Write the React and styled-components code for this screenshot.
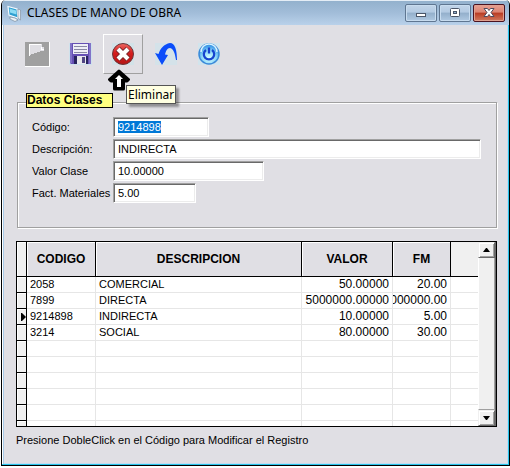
import React from "react";
import styled, { createGlobalStyle } from "styled-components";

const GlobalStyle = createGlobalStyle`
  *, *::before, *::after { box-sizing: border-box; }
  body { margin: 0; background: #fff; color: #000; font: 11px/16px "Liberation Sans", Arial, sans-serif; }
`;

const Window = styled.main`
  margin: 0 0 2px 1px;
  border: solid #000;
  border-width: 0 1px 1px;
  border-radius: 5px 5px 0 0;
  background: #e0dfe4;
  box-shadow: inset -1px -1px 0 #27c4ea, inset 1px 0 0 #fff, inset 2px 0 0 #a9cbe8, inset -2px -2px 0 #c2dcf2;
  overflow: hidden;
`;

const TitleBar = styled.header`
  display: flex;
  align-items: center;
  height: 25px;
  padding: 0 4px 0 5px;
  gap: 5px;
  border-top: 1px solid #e4edf6;
  background: linear-gradient(#93b1cd, #a2bdd9 50%, #b9d1ea);
`;

const Title = styled.h1`
  flex: 1;
  margin: 0;
  font: 12px/18px "Noto Sans", "Open Sans", sans-serif;
  white-space: nowrap;
`;

const Controls = styled.div`
  display: flex;
  gap: 2px;
`;

const ControlButton = styled.button`
  display: flex;
  align-items: center;
  justify-content: center;
  width: 32px;
  height: 18px;
  padding: 0;
  border: 1px solid ${(p) => (p.$close ? "#4a1220" : "#5f7691")};
  border-radius: 2px;
  box-shadow: inset 0 0 0 1px ${(p) => (p.$close ? "#e0a090" : "#c8dcef")};
  background: ${(p) =>
    p.$close
      ? "linear-gradient(#e8a092, #dc8371 45%, #b93b22 50%, #d17a5f)"
      : "linear-gradient(#c2d5e9, #b3cae2 45%, #93afcb 50%, #b0c9e2)"};
`;

const Toolbar = styled.div`
  display: flex;
  gap: 3px;
  padding: 9px 15px 0;
`;

const ToolItem = styled.div`
  position: relative;
`;

const ToolButton = styled.button`
  display: flex;
  align-items: center;
  justify-content: center;
  width: 40px;
  height: 40px;
  padding: 0;
  background: transparent;
  border: 1px solid;
  border-color: ${(p) => (p.$raised ? "#fff #a0a0a0 #a0a0a0 #fff" : "transparent")};
`;

const Pointer = styled.svg`
  position: absolute;
  left: 4px;
  top: 35px;
  z-index: 2;
`;

const Tooltip = styled.div`
  position: absolute;
  left: 23px;
  top: 51px;
  z-index: 3;
  padding: 0 1px;
  border: 1px solid #555;
  background: #ffffe1;
  box-shadow: 3px 3px 2px rgba(0, 0, 0, 0.35);
  font: 12px/17px "Noto Sans", "Open Sans", sans-serif;
  white-space: nowrap;
`;

const Group = styled.fieldset`
  position: relative;
  min-width: 0;
  margin: 28px 12px 0 15px;
  padding: 14px 15px 24px 14px;
  border: 1px solid #a0a0a0;
  box-shadow: 1px 1px 0 #fff, inset 1px 1px 0 #fff;
`;

const GroupTitle = styled.legend`
  position: absolute;
  left: 8px;
  top: -10px;
  width: 87px;
  padding: 0;
  border: 1px solid #000;
  background: #ffff80;
  font: bold 12px/13px "Liberation Sans", Arial, sans-serif;
`;

const Fields = styled.div`
  display: grid;
  grid-template-columns: 78px minmax(0, 1fr);
  column-gap: 3px;
  row-gap: 2px;
`;

const FieldLabel = styled.label`
  line-height: 20px;
  white-space: nowrap;
`;

const TextBox = styled.input`
  width: ${(p) => p.$width};
  height: 20px;
  padding: 0 4px;
  border: 1px solid;
  border-color: #a0a0a0 #fff #fff #a0a0a0;
  border-radius: 0;
  outline: 0;
  background: #fff;
  box-shadow: inset 1px 1px 0 #696969, inset -1px -1px 0 #ececec;
  color: #000;
  font: 11px/16px "Liberation Sans", Arial, sans-serif;
  &::selection { background: #0078d7; color: #fff; }
`;

const GridFrame = styled.section`
  display: flex;
  height: 186px;
  margin: 13px 12px 0 14px;
  border: 1px solid #000;
  background: #fff;
  overflow: hidden;
`;

const Table = styled.table`
  flex: 1;
  width: 0;
  height: max-content;
  table-layout: fixed;
  border-collapse: separate;
  border-spacing: 0;
`;

const Column = styled.col`
  width: ${(p) => p.$width};
`;

const HeadCell = styled.th`
  height: 35px;
  padding: 0;
  border: solid #000;
  border-width: 0 1px 1px 0;
  background: #e0dfe4;
  box-shadow: inset 1px 1px 0 #fff;
  font: bold 12px/16px "Liberation Sans", Arial, sans-serif;
`;

const HeadFiller = styled.td`
  padding: 0;
  border-bottom: 1px solid #000;
  background: #f0f0f0;
`;

const Selector = styled.td`
  height: 16px;
  padding: 0;
  border: solid #000;
  border-width: 0 1px 1px 0;
  background: #f0f0f0;
  box-shadow: inset 1px 1px 0 #fff;
`;

const Marker = styled.svg`
  display: block;
  margin-left: auto;
`;

const Cell = styled.td`
  height: 16px;
  padding: 0;
  border: solid #e6e6e6;
  border-width: 0 ${(p) => (p.$last ? 0 : "1px")} 1px 0;
  font-size: ${(p) => (p.$number ? "12px" : "11px")};
`;

const CellText = styled.div`
  display: flex;
  justify-content: ${(p) => (p.$number ? "flex-end" : "flex-start")};
  height: 15px;
  padding: 0 3px;
  line-height: 15px;
  overflow: hidden;
  white-space: nowrap;
`;

const ScrollBar = styled.div`
  display: flex;
  flex-direction: column;
  width: 18px;
  border-right: 1px solid #696969;
  background: #f0f0f0;
  box-shadow: inset -1px 0 0 #a0a0a0;
`;

const ScrollButton = styled.button`
  display: flex;
  align-items: center;
  justify-content: center;
  height: 16px;
  padding: 0;
  border: 1px solid;
  border-color: #f0f0f0 #696969 #696969 #f0f0f0;
  background: #f0f0f0;
  box-shadow: inset 1px 1px 0 #fff, inset -1px -1px 0 #a0a0a0;
`;

const ScrollTrack = styled.div`
  flex: 1;
  border-left: 1px solid #fff;
  border-bottom: 1px solid #a0a0a0;
`;

const Hint = styled.p`
  margin: 0;
  padding: 5px 14px 17px;
`;

const AppIcon = () => (
  <svg width="15" height="17" viewBox="0 0 15 17" aria-hidden="true">
    <path d="M1 1.500l9 2.500 1 9-9-3z" fill="#2f9fd0" stroke="#f4faff" strokeWidth="1.200" />
    <path d="M2.500 3.500l6.500 2 .5 4-6.500-2z" fill="#8edcf4" />
    <path d="M11 4l2.500 1v10L11 13z" fill="#e7edf2" stroke="#7d8c9b" strokeWidth=".6" />
    <path d="M3 12l5 1 3 2-3 1.500-5-2.500z" fill="#eef3f7" stroke="#6d7f92" strokeWidth=".6" />
  </svg>
);

const NewIcon = () => (
  <svg width="25" height="25" viewBox="0 0 25 25" shapeRendering="crispEdges" aria-hidden="true">
    <path d="M0 0h25v25H0z" fill="#fff" />
    <path d="M0 0h24v24H0z" fill="#a0a0a0" />
    <path d="M4 2h13v3h2v4h-4v1h-3v1H9v1H6v1H5v1H4z" fill="#e0dfe4" />
    <path d="M4 14V2h12M16 5v2h3" fill="none" stroke="#fff" />
  </svg>
);

const SaveIcon = () => (
  <svg width="23" height="22" viewBox="0 0 23 22" aria-hidden="true">
    <path d="M0 0h23v22H0z" fill="#cfe2ec" />
    <path d="M1 0h21v21H2l-1-1z" fill="#6650b4" />
    <path d="M1 0h2v20H1zM20 0h2v21h-2z" fill="#8173c8" />
    <path d="M4 1h15v10H4z" fill="#eeeef6" />
    <path d="M5 3.500h13M5 6.500h13M5 9.500h13" stroke="#8988a4" />
    <path d="M5 13h14v8H5z" fill="#28245f" />
    <path d="M8 13h9v8H8z" fill="#e9e9ed" />
    <path d="M13 14h3v6h-3z" fill="#514684" />
  </svg>
);

const DeleteIcon = () => (
  <svg width="22" height="22" viewBox="0 0 22 22" aria-hidden="true">
    <defs>
      <linearGradient id="red" x1="0" y1="0" x2="0" y2="1">
        <stop offset="0" stopColor="#ed6661" />
        <stop offset=".45" stopColor="#d51d1d" />
        <stop offset="1" stopColor="#b51515" />
      </linearGradient>
    </defs>
    <path d="M0 0h22v22H0z" fill="#d2e2e8" />
    <circle cx="11" cy="11" r="10.500" fill="url(#red)" stroke="#6b3438" />
    <path d="M5.800 5.800l10.400 10.400M16.200 5.800L5.800 16.200" stroke="#79272b" strokeWidth="6" />
    <path d="M6 6l10 10M16 6L6 16" stroke="#fff" strokeWidth="4.200" />
  </svg>
);

const UndoIcon = () => (
  <svg width="22" height="22" viewBox="0 0 22 22" aria-hidden="true">
    <path d="M0 0h22v22H0z" fill="#d4e2e9" />
    <path d="M0 10l3.500 1C5 6 9 1 15 0c5 0 7 7 7 17h-1c-1-6-2-11-6-12-3 0-4 3-5 6.500l3 .5-6 10z" fill="#0b4dfa" />
  </svg>
);

const PowerIcon = () => (
  <svg width="22" height="22" viewBox="0 0 22 22" aria-hidden="true">
    <defs>
      <radialGradient id="glass" cx=".5" cy=".7" r=".6">
        <stop offset="0" stopColor="#d7ffff" />
        <stop offset=".6" stopColor="#8cd6f8" />
        <stop offset="1" stopColor="#409be8" />
      </radialGradient>
    </defs>
    <path d="M0 0h22v22H0z" fill="#d2e4ec" />
    <circle cx="11" cy="11" r="10" fill="url(#glass)" stroke="#3c8ad9" strokeWidth="1.500" />
    <path d="M3 9a8 8 0 0 1 16 0" fill="none" stroke="#d9f3ff" strokeWidth="1.500" />
    <path d="M8 7a5.200 5.200 0 1 0 6 0M11 4.500v6" fill="none" stroke="#1744cf" strokeWidth="2.300" />
  </svg>
);

const tools = [
  { name: "Nuevo", Icon: NewIcon },
  { name: "Guardar", Icon: SaveIcon },
  { name: "Eliminar", Icon: DeleteIcon, active: true },
  { name: "Deshacer", Icon: UndoIcon },
  { name: "Salir", Icon: PowerIcon },
];

const fields = [
  { id: "codigo", label: "Código:", value: "9214898", width: "96px", selected: true },
  { id: "descripcion", label: "Descripción:", value: "INDIRECTA", width: "100%" },
  { id: "valor", label: "Valor Clase", value: "10.00000", width: "151px" },
  { id: "materiales", label: "Fact. Materiales", value: "5.00", width: "83px" },
];

const rows = [
  ["2058", "COMERCIAL", "50.00000", "20.00"],
  ["7899", "DIRECTA", "5000000.00000", "5000000.00"],
  ["9214898", "INDIRECTA", "10.00000", "5.00"],
  ["3214", "SOCIAL", "80.00000", "30.00"],
  ...Array.from({ length: 6 }, () => ["", "", "", ""]),
];

const selectAll = (node) => {
  if (node) {
    node.focus();
    node.select();
  }
};

export default function App() {
  return (
    <>
      <GlobalStyle />
      <Window>
        <TitleBar>
          <AppIcon />
          <Title>CLASES DE MANO DE OBRA</Title>
          <Controls>
            <ControlButton aria-label="Minimizar">
              <svg width="12" height="12" viewBox="0 0 12 12">
                <rect x="1.500" y="6.500" width="9" height="3" fill="#fff" stroke="#4b5668" />
              </svg>
            </ControlButton>
            <ControlButton aria-label="Maximizar">
              <svg width="12" height="12" viewBox="0 0 12 12">
                <rect x="1.500" y="1.500" width="9" height="8" rx="1" fill="#fff" stroke="#4b5668" />
                <rect x="4.500" y="4.500" width="3" height="2" fill="#8fb1d2" stroke="#4b5668" />
              </svg>
            </ControlButton>
            <ControlButton $close aria-label="Cerrar">
              <svg width="12" height="12" viewBox="0 0 12 12">
                <path d="M1 1.500h3.500L6 3.500l1.500-2H11L8 5.500l3 4H7.500L6 7.500l-1.500 2H1l3-4z" fill="#fff" stroke="#514a5c" />
              </svg>
            </ControlButton>
          </Controls>
        </TitleBar>

        <Toolbar role="toolbar">
          {tools.map(({ name, Icon, active }) => (
            <ToolItem key={name}>
              <ToolButton $raised={active} aria-label={name}>
                <Icon />
              </ToolButton>
              {active && (
                <>
                  <Pointer width="24" height="22" viewBox="0 0 24 22" aria-hidden="true">
                    <path d="M12 2L2.500 10.500 4 12h3.500v8h9v-8H20l1.500-1.500z" fill="#000" stroke="#000" strokeWidth="3" strokeLinejoin="round" />
                    <path d="M12 6l-4 4h2v8h4v-8h2z" fill="#fff" />
                  </Pointer>
                  <Tooltip role="tooltip">{name}</Tooltip>
                </>
              )}
            </ToolItem>
          ))}
        </Toolbar>

        <Group>
          <GroupTitle>Datos Clases</GroupTitle>
          <Fields>
            {fields.map((f) => (
              <React.Fragment key={f.id}>
                <FieldLabel htmlFor={f.id}>{f.label}</FieldLabel>
                <TextBox id={f.id} defaultValue={f.value} $width={f.width} ref={f.selected ? selectAll : undefined} />
              </React.Fragment>
            ))}
          </Fields>
        </Group>

        <GridFrame>
          <Table>
            <colgroup>
              <Column $width="10px" />
              <Column $width="69px" />
              <Column />
              <Column $width="91px" />
              <Column $width="58px" />
              <Column $width="27px" />
            </colgroup>
            <thead>
              <tr>
                <Selector />
                <HeadCell>CODIGO</HeadCell>
                <HeadCell>DESCRIPCION</HeadCell>
                <HeadCell>VALOR</HeadCell>
                <HeadCell>FM</HeadCell>
                <HeadFiller />
              </tr>
            </thead>
            <tbody>
              {rows.map((row, r) => (
                <tr key={r}>
                  <Selector>
                    {r === 2 && (
                      <Marker width="5" height="8" viewBox="0 0 5 8" aria-label="Registro actual">
                        <path d="M0 0h1l4 4-4 4H0z" />
                      </Marker>
                    )}
                  </Selector>
                  {row.map((text, c) => (
                    <Cell key={c} $number={c > 1}>
                      <CellText $number={c > 1}>{text}</CellText>
                    </Cell>
                  ))}
                  <Cell $last />
                </tr>
              ))}
            </tbody>
          </Table>
          <ScrollBar>
            <ScrollButton aria-label="Subir">
              <svg width="7" height="4" viewBox="0 0 7 4"><path d="M3 0h1l3 4H0z" /></svg>
            </ScrollButton>
            <ScrollTrack />
            <ScrollButton aria-label="Bajar">
              <svg width="7" height="4" viewBox="0 0 7 4"><path d="M3 4h1l3-4H0z" /></svg>
            </ScrollButton>
          </ScrollBar>
        </GridFrame>

        <Hint>Presione DobleClick en el Código para Modificar el Registro</Hint>
      </Window>
    </>
  );
}
